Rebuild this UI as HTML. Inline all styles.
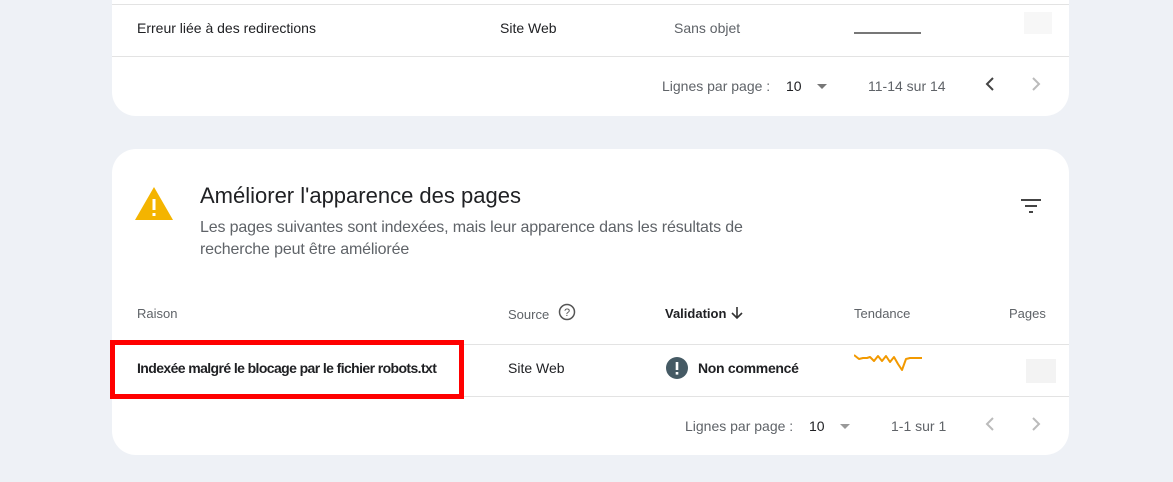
<!DOCTYPE html>
<html><head><meta charset="utf-8"><style>
*{margin:0;padding:0;box-sizing:border-box}
body{width:1173px;height:482px;background:#eef1f6;font-family:"Liberation Sans",sans-serif;position:relative;overflow:hidden;color:#202124}
.card{position:absolute;left:112px;width:957px;background:#fff}
.t{position:absolute;font-size:14px;white-space:nowrap}
.line{position:absolute;left:0;right:0;height:1px;background:#e3e3e3}
.g{color:#5f6368}
</style></head><body>
<div class="card" style="top:-30px;height:146px;border-radius:0 0 24px 24px">
  <div class="line" style="top:34px"></div>
  <div class="t" style="left:25px;top:50px">Erreur liée à des redirections</div>
  <div class="t" style="left:388px;top:50px">Site Web</div>
  <div class="t g" style="left:562px;top:50px">Sans objet</div>
  <div style="position:absolute;left:742px;top:62px;width:67px;height:2px;background:#777"></div>
  <div style="position:absolute;left:912px;top:42px;width:28px;height:22px;background:#f7f7f7"></div>
  <div class="line" style="top:86px"></div>
  <div class="t g" style="left:550px;top:108px">Lignes par page :</div>
  <div class="t" style="left:674px;top:108px">10</div>
  <div style="position:absolute;left:705px;top:114px;border:5px solid transparent;border-top:5px solid #777"></div>
  <div class="t g" style="left:756px;top:108px">11-14 sur 14</div>
  <svg style="position:absolute;left:870px;top:106px" width="16" height="16"><path d="M11 2 L5 8 L11 14" stroke="#444" stroke-width="2" fill="none"/></svg>
  <svg style="position:absolute;left:916px;top:106px" width="16" height="16"><path d="M5 2 L11 8 L5 14" stroke="#bbb" stroke-width="2" fill="none"/></svg>
</div>
<div class="card" style="top:149px;height:306px;border-radius:24px">
  <svg style="position:absolute;left:22px;top:36px" width="40" height="36"><path d="M20 2 L39 35 L1 35 Z" fill="#f4b400"/><rect x="18.5" y="14" width="3" height="11" fill="#fff"/><rect x="18.5" y="28" width="3" height="3" fill="#fff"/></svg>
  <div class="t" style="left:88px;top:34px;font-size:22px">Améliorer l'apparence des pages</div>
  <div class="t g" style="left:88px;top:68px;font-size:16px;line-height:22px;letter-spacing:-0.15px">Les pages suivantes sont indexées, mais leur apparence dans les résultats de<br>recherche peut être améliorée</div>
  <svg style="position:absolute;left:909px;top:49px" width="20" height="16"><path d="M0 2h20M4 8h12M8 14h4" stroke="#444" stroke-width="2"/></svg>
  <div class="t g" style="left:25px;top:157px;font-size:13px">Raison</div>
  <div class="t g" style="left:396px;top:158px;font-size:13px">Source</div>
  <svg style="position:absolute;left:446px;top:154px" width="18" height="18"><circle cx="9" cy="9" r="7.5" stroke="#555" stroke-width="1.5" fill="none"/><text x="9" y="13" font-size="11" text-anchor="middle" fill="#555" font-family="Liberation Sans">?</text></svg>
  <div class="t" style="left:553px;top:157px;font-size:13px;font-weight:bold">Validation</div>
  <svg style="position:absolute;left:618px;top:157px" width="14" height="14"><path d="M7 1v11M2 7l5 5 5-5" stroke="#333" stroke-width="1.6" fill="none"/></svg>
  <div class="t g" style="left:742px;top:157px;font-size:13px">Tendance</div>
  <div class="t g" style="left:897px;top:157px;font-size:13px">Pages</div>
  <div class="line" style="top:195px"></div>
  <div class="t" style="left:25px;top:211px;font-weight:bold;letter-spacing:-0.6px">Indexée malgré le blocage par le fichier robots.txt</div>
  <div class="t" style="left:396px;top:211px">Site Web</div>
  <svg style="position:absolute;left:554px;top:208px" width="22" height="22"><circle cx="11" cy="11" r="11" fill="#455a64"/><rect x="9.7" y="5" width="2.6" height="8" fill="#fff"/><rect x="9.7" y="15" width="2.6" height="2.6" fill="#fff"/></svg>
  <div class="t" style="left:586px;top:211px;font-weight:bold;letter-spacing:-0.3px">Non commencé</div>
  <svg style="position:absolute;left:742px;top:204px" width="70" height="20"><path d="M0 2 L5 6 L9 5 L13 5 L16 4 L20 8 L24 3 L28 8 L32 3 L36 9 L40 4 L44 11 L48 17 L52 6 L56 5 L68 5" stroke="#f29900" stroke-width="2" fill="none" stroke-linejoin="round"/></svg>
  <div style="position:absolute;left:914px;top:210px;width:30px;height:24px;background:#f3f3f3"></div>
  <div class="line" style="top:247px"></div>
  <div class="t g" style="left:573px;top:269px">Lignes par page :</div>
  <div class="t" style="left:697px;top:269px">10</div>
  <div style="position:absolute;left:728px;top:275px;border:5px solid transparent;border-top:5px solid #999"></div>
  <div class="t g" style="left:779px;top:269px">1-1 sur 1</div>
  <svg style="position:absolute;left:870px;top:267px" width="16" height="16"><path d="M11 2 L5 8 L11 14" stroke="#bbb" stroke-width="2" fill="none"/></svg>
  <svg style="position:absolute;left:916px;top:267px" width="16" height="16"><path d="M5 2 L11 8 L5 14" stroke="#bbb" stroke-width="2" fill="none"/></svg>
</div>
<div style="position:absolute;left:110px;top:340px;width:354px;height:59px;border:5px solid #ff0000"></div>
</body></html>
